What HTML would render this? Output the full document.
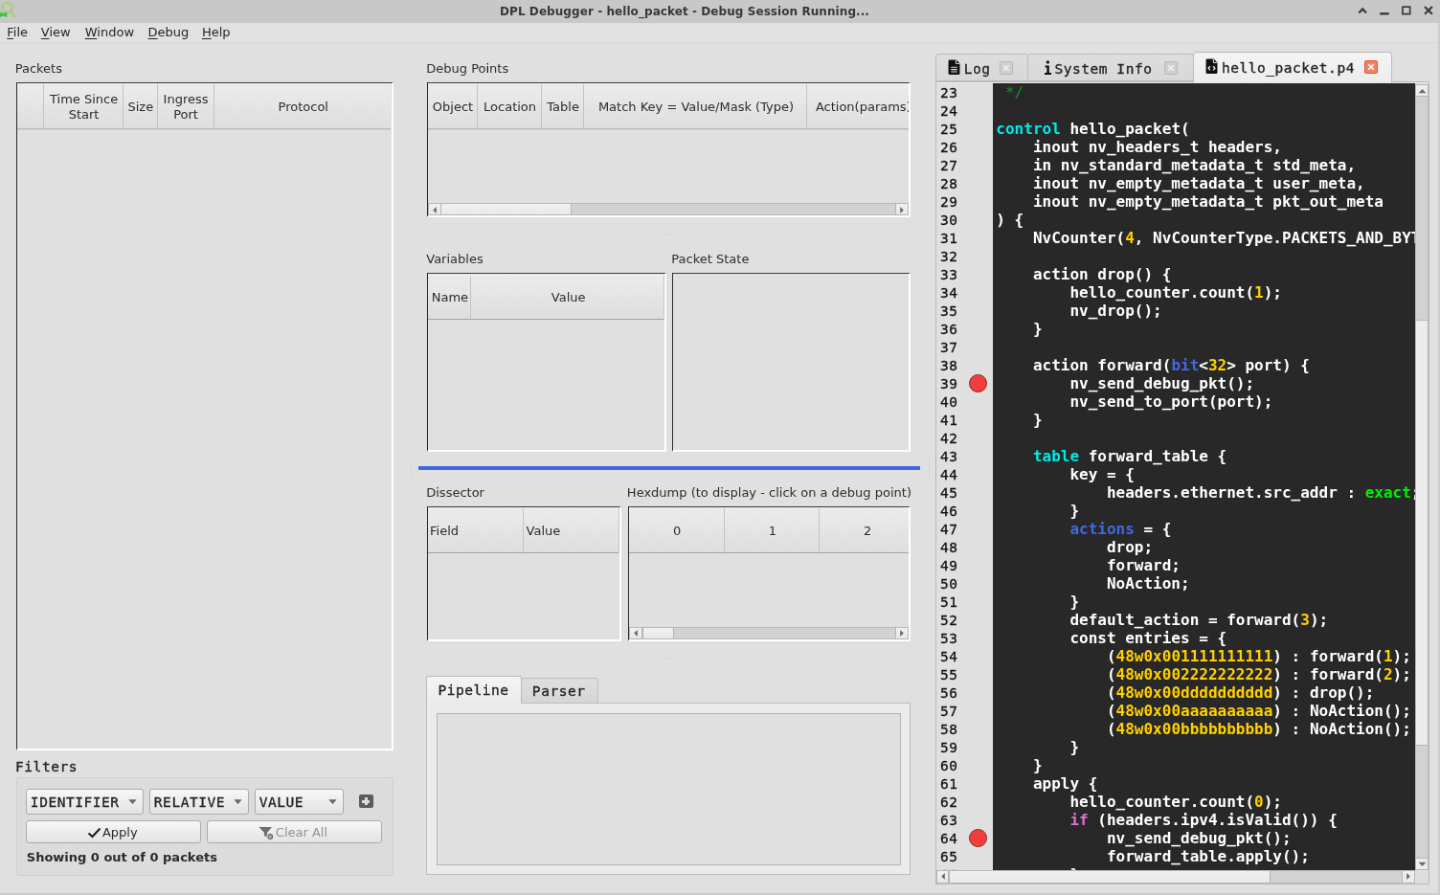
<!DOCTYPE html>
<html lang="en">
<head>
<meta charset="utf-8">
<title>DPL Debugger - hello_packet - Debug Session Running...</title>
<style>
*{box-sizing:border-box;margin:0;padding:0}
html,body{width:1440px;height:895px;overflow:hidden;background:#e0e0e0}
#w{position:absolute;left:0;top:0;width:1504px;height:935px;transform-origin:0 0;transform:scale(0.957447,0.957219);will-change:transform;background:#e0e0e0;font-family:"DejaVu Sans","Liberation Sans",sans-serif;font-size:13px;color:#3a3a3a;overflow:hidden}
.abs{position:absolute}
.titlebar{left:0;top:0;width:1504px;height:23.8px;background:#c8c8c8}
.title{top:0.6px;height:24px;line-height:22px;font-weight:bold;font-size:12px;letter-spacing:0.07px;color:#383838;white-space:nowrap}
.menubar{left:0;top:24px;width:1502px;height:21px;background:#e1e1e1;border-bottom:1px solid #d6d6d6}
.menu{top:24.4px;height:20px;line-height:20px;font-size:13px;color:#262626;white-space:nowrap}
.menu u{text-decoration:underline;text-underline-offset:2px}
.lbl{font-size:13px;color:#2e2e2e;white-space:nowrap;line-height:16px}
.um{font-family:"DejaVu Sans Mono","Liberation Mono",monospace;font-size:14.5px;letter-spacing:0.54px;-webkit-text-stroke:0.3px #222;color:#222;line-height:18px}
.mono{font-family:"DejaVu Sans Mono","Liberation Mono",monospace}
.sunk{border-top:1.8px solid #3c3c3c;border-left:1.6px solid #2a2a2a;border-right:2px solid #fff;border-bottom:2px solid #fff;background:#e0e0e0}
.sunk>.in{position:absolute;left:0;top:0;right:0;bottom:0;border-top:1px solid #9a9a9a;border-left:1px solid #9a9a9a;border-right:1px solid #ececec;border-bottom:1px solid #ececec;overflow:hidden}
.hdr{background:linear-gradient(#ececec,#dedede);border-bottom:1px solid #b9b9b9;box-shadow:0 1px 0 #cfcfcf}
.hdr.thin{border-bottom:1px solid #a2a2a2;box-shadow:none}
.hdr.thin .hc{top:1.8px}
.hc{position:absolute;top:1px;height:100%;border-right:1px solid #c3c3c3;display:flex;align-items:center;justify-content:center;text-align:center;font-size:13px;line-height:16px;color:#2c2c2c;white-space:nowrap}
.hc.l{justify-content:flex-start}
.sb{background:#d2d2d2;border:1px solid #bababa}
.sbb{background:linear-gradient(#f1f1f1,#e8e8e8);border:1px solid #b6b6b6}
.sbv{background:linear-gradient(90deg,#f0f0f0,#eaeaea);border:1px solid #b6b6b6}
.btn{background:linear-gradient(#f7f7f7,#e3e3e3);border:1px solid #acacac;border-radius:3px}
.code{font-family:"DejaVu Sans Mono","Liberation Mono",monospace;font-weight:bold;font-size:16px;color:#fff;white-space:pre}
.ln{font-family:"DejaVu Sans Mono","Liberation Mono",monospace;font-size:14.5px;color:#111;white-space:pre;-webkit-text-stroke:0.3px #111;letter-spacing:0.54px}
.k1{color:#00ebe6}.k2{color:#4169e1}.nm{color:#ffd000}.ex{color:#00f000}.if{color:#da70d6}.cm{color:#228b22;font-weight:normal}
</style>
</head>
<body>
<div id="w">
<div class="abs titlebar"></div>
<div class="abs title" style="left:522.01px">DPL Debugger - hello_packet - Debug Session Running...</div>
<svg class="abs" style="left:0;top:0" width="20" height="22" viewBox="0 0 20 22"><circle cx="7.7" cy="8" r="5.2" fill="none" stroke="#a9d07a" stroke-width="3.1" opacity="0.8"/><path d="M11.2 12 L15.6 17" stroke="#a4cf6c" stroke-width="2.6" stroke-linecap="round" opacity="0.8"/><path d="M0 12.4 L3.6 14 L7.3 12.4 L7.3 18 L3.6 16.4 L0 18 Z" fill="#3cc24a"/></svg>
<svg class="abs" style="left:1410px;top:0" width="94" height="24" viewBox="0 0 94 24"><g fill="none" stroke="#3a3a3a" stroke-width="2.2"><path d="M9.3 13.5 L13.15 9.4 L17 13.5"/><path d="M31.2 14.3 H40.7" stroke-width="2.4"/><rect x="54.95" y="7.15" width="7.7" height="7.5" stroke-width="1.7"/><path d="M78 7 L85.9 14.8 M85.9 7 L78 14.8"/></g></svg>
<div class="abs menubar"></div>
<div class="abs menu" style="left:7.31px"><u>F</u>ile</div>
<div class="abs menu" style="left:42.82px"><u>V</u>iew</div>
<div class="abs menu" style="left:88.78px"><u>W</u>indow</div>
<div class="abs menu" style="left:154.58px"><u>D</u>ebug</div>
<div class="abs menu" style="left:210.98px"><u>H</u>elp</div>
<div class="abs" style="left:1502px;top:24px;width:2px;height:911px;background:#cdcdcd"></div>
<div class="abs" style="left:0;top:933px;width:1504px;height:2px;background:#cdcdcd"></div>
<div class="abs lbl" style="left:15.67px;top:63.94px;">Packets</div>
<div class="abs sunk" style="left:16.71px;top:86.19px;width:394.28px;height:697.33px;overflow:hidden"><div class="abs hdr" style="left:0;top:0;width:390.78px;height:48.2px"><div class="hc" style="left:-0.45px;width:28.72px;padding-left:1px;"></div><div class="hc" style="left:28.27px;width:83.24px;padding-left:1px;">Time Since<br>Start</div><div class="hc" style="left:111.51px;width:35.3px;padding-left:1px;">Size</div><div class="hc" style="left:146.81px;width:59.12px;padding-left:1px;">Ingress<br>Port</div><div class="hc" style="left:205.93px;width:186.33px;padding-left:1px;">Protocol</div></div></div>
<div class="abs lbl um" style="left:16.08px;top:792.09px;">Filters</div>
<div class="abs " style="left:17.02px;top:812.14px;width:393.97px;height:102.59px;border:1px solid #d0d0d0;border-radius:2px;background:#dcdcdc"></div>
<div class="abs btn um" style="left:27.47px;top:824.47px;width:122.72px;height:26.43px;line-height:27px;padding-left:3.4px;">IDENTIFIER<svg class="abs" style="right:6px;top:9.3px" width="9" height="5.5" viewBox="0 0 9 5.5"><path d="M0.3 0.3 L8.7 0.3 L4.5 5.2Z" fill="#6a6a6a"/></svg></div>
<div class="abs btn um" style="left:156.46px;top:824.47px;width:103.29px;height:26.43px;line-height:27px;padding-left:3.4px;">RELATIVE<svg class="abs" style="right:6px;top:9.3px" width="9" height="5.5" viewBox="0 0 9 5.5"><path d="M0.3 0.3 L8.7 0.3 L4.5 5.2Z" fill="#6a6a6a"/></svg></div>
<div class="abs btn um" style="left:266.33px;top:824.47px;width:92.65px;height:26.43px;line-height:27px;padding-left:3.4px;">VALUE<svg class="abs" style="right:6px;top:9.3px" width="9" height="5.5" viewBox="0 0 9 5.5"><path d="M0.3 0.3 L8.7 0.3 L4.5 5.2Z" fill="#6a6a6a"/></svg></div>
<div class="abs " style="left:375.16px;top:830.32px;width:14.42px;height:14.0px;background:#5c5c5c;border-radius:2px"><div class="abs" style="left:3.2px;top:5.9px;width:8px;height:2.4px;background:#dcdcdc"></div><div class="abs" style="left:6px;top:3px;width:2.4px;height:8px;background:#dcdcdc"></div></div>
<div class="abs btn" style="left:27.47px;top:857.07px;width:182.67px;height:24.23px;font-size:13px;line-height:23px;text-align:center;color:#2a2a2a;padding-right:3px"><svg style="vertical-align:-1.5px;margin-right:1px" width="15" height="12" viewBox="0 0 15 12"><path d="M1.5 6.5 L5.5 10 L13.5 1.5" fill="none" stroke="#1a1a1a" stroke-width="2"/></svg>Apply</div>
<div class="abs btn" style="left:215.99px;top:857.07px;width:182.99px;height:24.23px;font-size:13px;line-height:23px;text-align:center;color:#929292;padding-right:3px"><svg style="vertical-align:-3.5px;margin-right:1px" width="17" height="15" viewBox="0 0 17 15"><path d="M0.5 1 H14 L9 7 V12 L6 10 V7 Z" fill="#6e6e6e"/><circle cx="12.3" cy="11" r="3.6" fill="#6e6e6e" stroke="#ececec" stroke-width="1"/><path d="M11 9.7 L13.6 12.3 M13.6 9.7 L11 12.3" stroke="#e8e8e8" stroke-width="0.9"/></svg>Clear All</div>
<div class="abs lbl" style="left:27.78px;top:888.2px;font-weight:bold;color:#2a2a2a">Showing 0 out of 0 packets</div>
<div class="abs lbl" style="left:445.25px;top:63.94px;">Debug Points</div>
<div class="abs sunk" style="left:445.98px;top:86.19px;width:505.51px;height:141.03px;overflow:hidden"><div class="abs hdr" style="left:0;top:0;width:502.01px;height:48.2px"><div class="hc" style="left:-0.46px;width:52.02px;padding-left:2px;">Object</div><div class="hc" style="left:51.56px;width:67.05px;padding-left:2px;">Location</div><div class="hc" style="left:118.61px;width:44.07px;padding-left:2px;">Table</div><div class="hc" style="left:162.68px;width:233.75px;padding-left:2px;">Match Key = Value/Mask (Type)</div><div class="hc l" style="left:396.43px;width:116.98px;padding-left:8.5px;">Action(params)</div></div><div class="abs sb" style="left:0;bottom:0;width:502.01px;height:13.2px"><div class="abs sbb" style="left:-1px;top:-1px;width:14px;height:13.2px"></div><div class="abs sbb" style="right:-1px;top:-1px;width:14px;height:13.2px"></div><div class="abs sbb" style="left:12.12px;top:-1px;width:136.82px;height:13.2px"></div><svg class="abs" style="left:3px;top:1.5px" width="6" height="9" viewBox="0 0 6 9"><path d="M4.8 1 L1.2 4.5 L4.8 8Z" fill="#6a6a6a"/></svg><svg class="abs" style="right:3px;top:1.5px" width="6" height="9" viewBox="0 0 6 9"><path d="M1.2 1 L4.8 4.5 L1.2 8Z" fill="#6a6a6a"/></svg></div></div>
<div class="abs" style="left:691.42px;top:244.46px;width:17px;height:1px;background:repeating-linear-gradient(90deg,#c8c8c8 0 1px,transparent 1px 3px)"></div>
<div class="abs lbl" style="left:445.25px;top:263.47px;">Variables</div>
<div class="abs sunk" style="left:445.98px;top:285.2px;width:249.62px;height:186.48px;overflow:hidden"><div class="abs hdr thin" style="left:0;top:0;width:246.12px;height:48px"><div class="hc" style="left:-0.46px;width:45.75px;padding-left:2px;">Name</div><div class="hc" style="left:45.29px;width:201.79px;padding-left:2px;">Value</div></div></div>
<div class="abs lbl" style="left:701.34px;top:263.47px;">Packet State</div>
<div class="abs sunk" style="left:701.87px;top:285.2px;width:249.62px;height:186.48px;overflow:hidden"></div>
<div class="abs " style="left:437.1px;top:487.04px;width:523.79px;height:3.97px;background:#4169e1"></div>
<div class="abs lbl" style="left:445.25px;top:506.88px;">Dissector</div>
<div class="abs sunk" style="left:445.98px;top:528.61px;width:202.62px;height:141.56px;overflow:hidden"><div class="abs hdr thin" style="left:0;top:0;width:199.12px;height:48px"><div class="hc l" style="left:-0.46px;width:100.58px;padding-left:2.5px;">Field</div><div class="hc l" style="left:100.12px;width:99.96px;padding-left:2.5px;">Value</div></div></div>
<div class="abs lbl" style="left:654.87px;top:506.88px;">Hexdump (to display - click on a debug point)</div>
<div class="abs sunk" style="left:655.91px;top:528.61px;width:295.58px;height:141.56px;overflow:hidden"><div class="abs hdr thin" style="left:0;top:0;width:292.08px;height:48px"><div class="hc" style="left:-0.45px;width:100.26px;padding-left:2px;">0</div><div class="hc" style="left:99.81px;width:99.22px;padding-left:2px;">1</div><div class="hc" style="left:199.03px;width:99.23px;padding-left:2px;">2</div></div><div class="abs sb" style="left:0;bottom:0;width:292.08px;height:13.2px"><div class="abs sbb" style="left:-1px;top:-1px;width:14px;height:13.2px"></div><div class="abs sbb" style="right:-1px;top:-1px;width:14px;height:13.2px"></div><div class="abs sbb" style="left:13.48px;top:-1px;width:32.69px;height:13.2px"></div><svg class="abs" style="left:3px;top:1.5px" width="6" height="9" viewBox="0 0 6 9"><path d="M4.8 1 L1.2 4.5 L4.8 8Z" fill="#6a6a6a"/></svg><svg class="abs" style="right:3px;top:1.5px" width="6" height="9" viewBox="0 0 6 9"><path d="M1.2 1 L4.8 4.5 L1.2 8Z" fill="#6a6a6a"/></svg></div></div>
<div class="abs" style="left:691.42px;top:687.41px;width:17px;height:1px;background:repeating-linear-gradient(90deg,#c8c8c8 0 1px,transparent 1px 3px)"></div>
<div class="abs" style="left:428.74px;top:482.13px;width:1px;height:16px;background:repeating-linear-gradient(180deg,#c8c8c8 0 1px,transparent 1px 3px)"></div>
<div class="abs" style="left:969.56px;top:482.13px;width:1px;height:16px;background:repeating-linear-gradient(180deg,#c8c8c8 0 1px,transparent 1px 3px)"></div>
<div class="abs " style="left:445.35px;top:734.0px;width:506.14px;height:180.21px;border:1px solid #bcbcbc;background:#ebebeb"></div>
<div class="abs " style="left:456.21px;top:745.07px;width:484.83px;height:158.48px;border:1px solid #b4b4b4;background:#e0e0e0"></div>
<div class="abs um" style="left:544.16px;top:707.57px;width:81.04px;height:27.48px;border:1px solid #bcbcbc;border-radius:3px 3px 0 0;background:linear-gradient(#dedede,#d6d6d6);line-height:27px;text-align:center;padding-right:2px">Parser</div>
<div class="abs um" style="left:445.35px;top:705.79px;width:99.43px;height:29.67px;border:1px solid #bcbcbc;border-bottom:none;border-radius:3px 3px 0 0;background:linear-gradient(#f4f4f4,#ebebeb);line-height:28.5px;text-align:center;padding-right:1px">Pipeline</div>
<div class="abs " style="left:976.87px;top:84.52px;width:516.37px;height:839.2px;border:1px solid #b9b9b9;background:#ececec"></div>
<div class="abs " style="left:976.66px;top:55.89px;width:97.66px;height:29.36px;border:1px solid #bcbcbc;border-radius:3px 3px 0 0;background:linear-gradient(#dedede,#d8d8d8)"></div>
<div class="abs " style="left:1073.27px;top:55.89px;width:173.27px;height:29.36px;border:1px solid #bcbcbc;border-radius:3px 3px 0 0;background:linear-gradient(#dedede,#d8d8d8)"></div>
<div class="abs " style="left:1245.92px;top:53.91px;width:208.47px;height:32.8px;border:1px solid #bcbcbc;border-bottom:none;border-radius:4px 4px 0 0;background:linear-gradient(#f4f4f4,#ececec)"></div>
<svg class="abs" style="left:989.72px;top:62.37px" width="13" height="16.5" viewBox="0 0 12 16" preserveAspectRatio="none"><path d="M1.5 0.5 H8 L11.5 4 V14 Q11.5 15.5 10 15.5 H2 Q0.5 15.5 0.5 14 V2 Q0.5 0.5 1.5 0.5Z" fill="#111"/><path d="M7.7 0.8 V4.3 H11.2" fill="none" stroke="#e0e0e0" stroke-width="0.9"/><path d="M3 8 H9 M3 10.3 H9 M3 12.6 H9" stroke="#e0e0e0" stroke-width="1.1"/></svg>
<div class="abs lbl um" style="left:1006.84px;top:62.99px;">Log</div>
<div class="abs" style="left:1043.71px;top:64.25px;width:14px;height:14px;background:#cfcfcf;border:1px solid #b8b8b8;border-radius:1.5px"></div><svg class="abs" style="left:1043.71px;top:64.25px" width="14" height="14" viewBox="0 0 14 14"><path d="M4.2 4.2 L9.8 9.8 M9.8 4.2 L4.2 9.8" stroke="#f0f0f0" stroke-width="1.6"/></svg>
<svg class="abs" style="left:1089.56px;top:63.31px" width="9" height="15.5" viewBox="0 0 9 15.5"><circle cx="4.4" cy="1.9" r="1.7" fill="#111"/><path d="M1.6 5.6 H5.8 V13 H8 V15 H1 V13 H3.4 V7.4 H1.6Z" fill="#111"/></svg>
<div class="abs lbl um" style="left:1101.47px;top:62.99px;">System Info</div>
<div class="abs" style="left:1216.05px;top:64.25px;width:14px;height:14px;background:#cfcfcf;border:1px solid #b8b8b8;border-radius:1.5px"></div><svg class="abs" style="left:1216.05px;top:64.25px" width="14" height="14" viewBox="0 0 14 14"><path d="M4.2 4.2 L9.8 9.8 M9.8 4.2 L4.2 9.8" stroke="#f0f0f0" stroke-width="1.6"/></svg>
<svg class="abs" style="left:1259.39px;top:61.22px" width="13" height="16.5" viewBox="0 0 12 16" preserveAspectRatio="none"><path d="M1.5 0.5 H8 L11.5 4 V14 Q11.5 15.5 10 15.5 H2 Q0.5 15.5 0.5 14 V2 Q0.5 0.5 1.5 0.5Z" fill="#111"/><path d="M7.7 0.8 V4.3 H11.2" fill="none" stroke="#f0f0f0" stroke-width="0.9"/><path d="M4.6 8 L2.8 10 L4.6 12 M7.4 8 L9.2 10 L7.4 12" fill="none" stroke="#f0f0f0" stroke-width="1.2"/></svg>
<div class="abs lbl um" style="left:1275.89px;top:62.16px;">hello_packet.p4</div>
<div class="abs" style="left:1424.73px;top:63.2px;width:14px;height:14px;background:#ee8263;border:1px solid #e2563a;border-radius:1.5px"></div><svg class="abs" style="left:1424.73px;top:63.2px" width="14" height="14" viewBox="0 0 14 14"><path d="M4.2 4.2 L9.8 9.8 M9.8 4.2 L4.2 9.8" stroke="#fff" stroke-width="1.6"/></svg>
<div class="abs " style="left:977.81px;top:87.02px;width:514.49px;height:835.76px;background:#dedede"></div>
<div class="abs " style="left:977.81px;top:87.23px;width:59.22px;height:821.97px;background:#e0e0e0"></div>
<div class="abs " style="left:1037.03px;top:87.23px;width:441.07px;height:821.97px;background:#282828"></div>
<div class="abs" style="left:977.81px;top:87.96px;width:500.29px;height:821.24px;overflow:hidden"><div class="abs ln" style="left:4.28px;top:-0.11px;height:19px;line-height:19px">23</div><div class="abs code" style="left:62.56px;top:-0.91px;height:19px;line-height:19px"><span class="cm"> */</span></div><div class="abs ln" style="left:4.28px;top:18.89px;height:19px;line-height:19px">24</div><div class="abs code" style="left:62.56px;top:18.09px;height:19px;line-height:19px"></div><div class="abs ln" style="left:4.28px;top:37.89px;height:19px;line-height:19px">25</div><div class="abs code" style="left:62.56px;top:37.09px;height:19px;line-height:19px"><span class="k1">control</span> hello_packet(</div><div class="abs ln" style="left:4.28px;top:56.89px;height:19px;line-height:19px">26</div><div class="abs code" style="left:62.56px;top:56.09px;height:19px;line-height:19px">    inout nv_headers_t headers,</div><div class="abs ln" style="left:4.28px;top:75.89px;height:19px;line-height:19px">27</div><div class="abs code" style="left:62.56px;top:75.09px;height:19px;line-height:19px">    in nv_standard_metadata_t std_meta,</div><div class="abs ln" style="left:4.28px;top:94.89px;height:19px;line-height:19px">28</div><div class="abs code" style="left:62.56px;top:94.09px;height:19px;line-height:19px">    inout nv_empty_metadata_t user_meta,</div><div class="abs ln" style="left:4.28px;top:113.89px;height:19px;line-height:19px">29</div><div class="abs code" style="left:62.56px;top:113.09px;height:19px;line-height:19px">    inout nv_empty_metadata_t pkt_out_meta</div><div class="abs ln" style="left:4.28px;top:132.89px;height:19px;line-height:19px">30</div><div class="abs code" style="left:62.56px;top:132.09px;height:19px;line-height:19px">) {</div><div class="abs ln" style="left:4.28px;top:151.89px;height:19px;line-height:19px">31</div><div class="abs code" style="left:62.56px;top:151.09px;height:19px;line-height:19px">    NvCounter(<span class="nm">4</span>, NvCounterType.PACKETS_AND_BYTES) hello_counter;</div><div class="abs ln" style="left:4.28px;top:170.89px;height:19px;line-height:19px">32</div><div class="abs code" style="left:62.56px;top:170.09px;height:19px;line-height:19px"></div><div class="abs ln" style="left:4.28px;top:189.89px;height:19px;line-height:19px">33</div><div class="abs code" style="left:62.56px;top:189.09px;height:19px;line-height:19px">    action drop() {</div><div class="abs ln" style="left:4.28px;top:208.89px;height:19px;line-height:19px">34</div><div class="abs code" style="left:62.56px;top:208.09px;height:19px;line-height:19px">        hello_counter.count(<span class="nm">1</span>);</div><div class="abs ln" style="left:4.28px;top:227.89px;height:19px;line-height:19px">35</div><div class="abs code" style="left:62.56px;top:227.09px;height:19px;line-height:19px">        nv_drop();</div><div class="abs ln" style="left:4.28px;top:246.89px;height:19px;line-height:19px">36</div><div class="abs code" style="left:62.56px;top:246.09px;height:19px;line-height:19px">    }</div><div class="abs ln" style="left:4.28px;top:265.89px;height:19px;line-height:19px">37</div><div class="abs code" style="left:62.56px;top:265.09px;height:19px;line-height:19px"></div><div class="abs ln" style="left:4.28px;top:284.89px;height:19px;line-height:19px">38</div><div class="abs code" style="left:62.56px;top:284.09px;height:19px;line-height:19px">    action forward(<span class="k2">bit</span>&lt;<span class="nm">32</span>&gt; port) {</div><div class="abs ln" style="left:4.28px;top:303.89px;height:19px;line-height:19px">39</div><div class="abs code" style="left:62.56px;top:303.09px;height:19px;line-height:19px">        nv_send_debug_pkt();</div><div class="abs" style="left:34.0px;top:302.89px;width:18.8px;height:18.8px;border-radius:50%;background:#f43e3e;border:1px solid #7a3030"></div><div class="abs ln" style="left:4.28px;top:322.89px;height:19px;line-height:19px">40</div><div class="abs code" style="left:62.56px;top:322.09px;height:19px;line-height:19px">        nv_send_to_port(port);</div><div class="abs ln" style="left:4.28px;top:341.89px;height:19px;line-height:19px">41</div><div class="abs code" style="left:62.56px;top:341.09px;height:19px;line-height:19px">    }</div><div class="abs ln" style="left:4.28px;top:360.89px;height:19px;line-height:19px">42</div><div class="abs code" style="left:62.56px;top:360.09px;height:19px;line-height:19px"></div><div class="abs ln" style="left:4.28px;top:379.89px;height:19px;line-height:19px">43</div><div class="abs code" style="left:62.56px;top:379.09px;height:19px;line-height:19px">    <span class="k1">table</span> forward_table {</div><div class="abs ln" style="left:4.28px;top:398.89px;height:19px;line-height:19px">44</div><div class="abs code" style="left:62.56px;top:398.09px;height:19px;line-height:19px">        key = {</div><div class="abs ln" style="left:4.28px;top:417.89px;height:19px;line-height:19px">45</div><div class="abs code" style="left:62.56px;top:417.09px;height:19px;line-height:19px">            headers.ethernet.src_addr : <span class="ex">exact</span>;</div><div class="abs ln" style="left:4.28px;top:436.89px;height:19px;line-height:19px">46</div><div class="abs code" style="left:62.56px;top:436.09px;height:19px;line-height:19px">        }</div><div class="abs ln" style="left:4.28px;top:455.89px;height:19px;line-height:19px">47</div><div class="abs code" style="left:62.56px;top:455.09px;height:19px;line-height:19px">        <span class="k2">actions</span> = {</div><div class="abs ln" style="left:4.28px;top:474.89px;height:19px;line-height:19px">48</div><div class="abs code" style="left:62.56px;top:474.09px;height:19px;line-height:19px">            drop;</div><div class="abs ln" style="left:4.28px;top:493.89px;height:19px;line-height:19px">49</div><div class="abs code" style="left:62.56px;top:493.09px;height:19px;line-height:19px">            forward;</div><div class="abs ln" style="left:4.28px;top:512.89px;height:19px;line-height:19px">50</div><div class="abs code" style="left:62.56px;top:512.09px;height:19px;line-height:19px">            NoAction;</div><div class="abs ln" style="left:4.28px;top:531.89px;height:19px;line-height:19px">51</div><div class="abs code" style="left:62.56px;top:531.09px;height:19px;line-height:19px">        }</div><div class="abs ln" style="left:4.28px;top:550.89px;height:19px;line-height:19px">52</div><div class="abs code" style="left:62.56px;top:550.09px;height:19px;line-height:19px">        default_action = forward(<span class="nm">3</span>);</div><div class="abs ln" style="left:4.28px;top:569.89px;height:19px;line-height:19px">53</div><div class="abs code" style="left:62.56px;top:569.09px;height:19px;line-height:19px">        const entries = {</div><div class="abs ln" style="left:4.28px;top:588.89px;height:19px;line-height:19px">54</div><div class="abs code" style="left:62.56px;top:588.09px;height:19px;line-height:19px">            (<span class="nm">48w0x001111111111</span>) : forward(<span class="nm">1</span>);</div><div class="abs ln" style="left:4.28px;top:607.89px;height:19px;line-height:19px">55</div><div class="abs code" style="left:62.56px;top:607.09px;height:19px;line-height:19px">            (<span class="nm">48w0x002222222222</span>) : forward(<span class="nm">2</span>);</div><div class="abs ln" style="left:4.28px;top:626.89px;height:19px;line-height:19px">56</div><div class="abs code" style="left:62.56px;top:626.09px;height:19px;line-height:19px">            (<span class="nm">48w0x00dddddddddd</span>) : drop();</div><div class="abs ln" style="left:4.28px;top:645.89px;height:19px;line-height:19px">57</div><div class="abs code" style="left:62.56px;top:645.09px;height:19px;line-height:19px">            (<span class="nm">48w0x00aaaaaaaaaa</span>) : NoAction();</div><div class="abs ln" style="left:4.28px;top:664.89px;height:19px;line-height:19px">58</div><div class="abs code" style="left:62.56px;top:664.09px;height:19px;line-height:19px">            (<span class="nm">48w0x00bbbbbbbbbb</span>) : NoAction();</div><div class="abs ln" style="left:4.28px;top:683.89px;height:19px;line-height:19px">59</div><div class="abs code" style="left:62.56px;top:683.09px;height:19px;line-height:19px">        }</div><div class="abs ln" style="left:4.28px;top:702.89px;height:19px;line-height:19px">60</div><div class="abs code" style="left:62.56px;top:702.09px;height:19px;line-height:19px">    }</div><div class="abs ln" style="left:4.28px;top:721.89px;height:19px;line-height:19px">61</div><div class="abs code" style="left:62.56px;top:721.09px;height:19px;line-height:19px">    apply {</div><div class="abs ln" style="left:4.28px;top:740.89px;height:19px;line-height:19px">62</div><div class="abs code" style="left:62.56px;top:740.09px;height:19px;line-height:19px">        hello_counter.count(<span class="nm">0</span>);</div><div class="abs ln" style="left:4.28px;top:759.89px;height:19px;line-height:19px">63</div><div class="abs code" style="left:62.56px;top:759.09px;height:19px;line-height:19px">        <span class="if">if</span> (headers.ipv4.isValid()) {</div><div class="abs ln" style="left:4.28px;top:778.89px;height:19px;line-height:19px">64</div><div class="abs code" style="left:62.56px;top:778.09px;height:19px;line-height:19px">            nv_send_debug_pkt();</div><div class="abs" style="left:34.0px;top:777.89px;width:18.8px;height:18.8px;border-radius:50%;background:#f43e3e;border:1px solid #7a3030"></div><div class="abs ln" style="left:4.28px;top:797.89px;height:19px;line-height:19px">65</div><div class="abs code" style="left:62.56px;top:797.09px;height:19px;line-height:19px">            forward_table.apply();</div><div class="abs ln" style="left:4.28px;top:816.89px;height:19px;line-height:19px">66</div><div class="abs code" style="left:62.56px;top:816.09px;height:19px;line-height:19px">        }</div></div>
<div class="abs sb" style="left:1478.1px;top:87.96px;width:14.2px;height:821.24px;border-width:0 1px"></div>
<div class="abs sbv" style="left:1478.1px;top:87.96px;width:14.2px;height:13.38px;"></div>
<div class="abs sbv" style="left:1478.1px;top:895.72px;width:14.2px;height:13.48px;"></div>
<div class="abs sbv" style="left:1478.1px;top:333.57px;width:14.2px;height:445.35px;"></div>
<svg class="abs" style="left:1481.02px;top:92.14px" width="9" height="6" viewBox="0 0 9 6"><path d="M0.5 5.2 L4.5 1 L8.5 5.2Z" fill="#6a6a6a"/></svg>
<svg class="abs" style="left:1481.02px;top:899.79px" width="9" height="6" viewBox="0 0 9 6"><path d="M0.5 0.8 L4.5 5 L8.5 0.8Z" fill="#6a6a6a"/></svg>
<div class="abs sb" style="left:977.81px;top:909.2px;width:500.29px;height:13.58px;border-width:1px 0"></div>
<div class="abs sbb" style="left:977.81px;top:909.2px;width:13.58px;height:13.58px;"></div>
<div class="abs sbb" style="left:1464.31px;top:909.2px;width:13.79px;height:13.58px;"></div>
<div class="abs sbb" style="left:990.86px;top:909.2px;width:336.0px;height:13.58px;"></div>
<svg class="abs" style="left:982.4px;top:911.49px" width="6" height="9" viewBox="0 0 6 9"><path d="M4.8 1 L1.2 4.5 L4.8 8Z" fill="#6a6a6a"/></svg>
<svg class="abs" style="left:1468.49px;top:911.49px" width="6" height="9" viewBox="0 0 6 9"><path d="M1.2 1 L4.8 4.5 L1.2 8Z" fill="#6a6a6a"/></svg>
</div>
</body>
</html>
